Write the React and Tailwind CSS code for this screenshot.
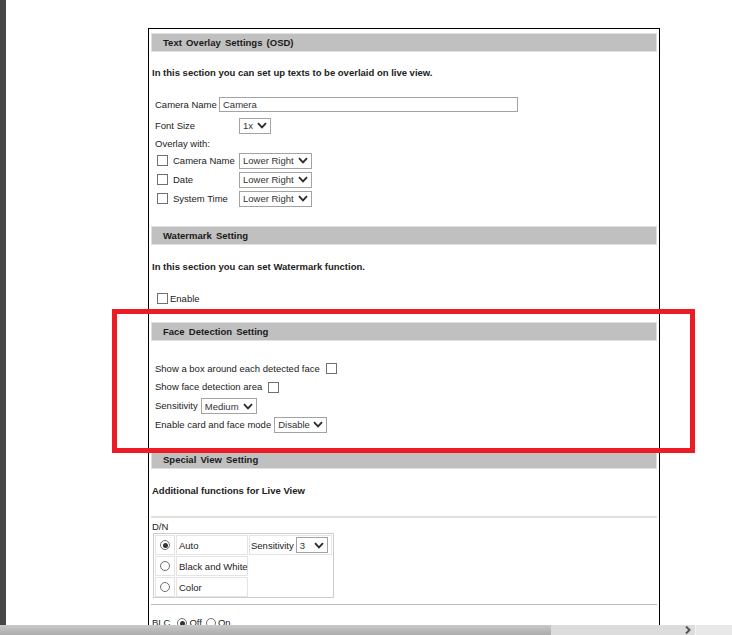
import React from "react";

function Chev() {
  return (
    <svg width="10" height="7" viewBox="0 0 10 7" className="shrink-0">
      <path d="M1 1.2 L5 5.4 L9 1.2" fill="none" stroke="#2a2a2a" strokeWidth="1.8" />
    </svg>
  );
}

function Select({ value, className }) {
  return (
    <div
      className={
        "flex items-center justify-between h-[16px] border border-[#a3a3a3] bg-white pl-[3px] pr-[3px] text-[#333] whitespace-nowrap " +
        className
      }
    >
      <span className="pt-[1px]">{value}</span>
      <Chev />
    </div>
  );
}

function Check({ className = "" }) {
  return <div className={"w-[11px] h-[11px] border border-[#707070] bg-white shrink-0 " + className} />;
}

function Radio({ checked }) {
  return (
    <div className="w-[10px] h-[10px] rounded-full border border-[#6f6f6f] bg-white flex items-center justify-center shrink-0">
      {checked && <div className="w-[5px] h-[5px] rounded-full bg-[#333]" />}
    </div>
  );
}

function Header({ children }) {
  return (
    <div className="h-[19px] bg-[#c0c0c0] border border-[#e0e0e0] flex items-center pl-[11px] pt-[1px] font-bold text-[#1a1a1a] [word-spacing:1.5px]">
      {children}
    </div>
  );
}

export default function App() {
  return (
    <div className="relative w-[732px] h-[635px] overflow-hidden bg-white flex font-['Liberation_Sans',Arial,sans-serif] text-[9.5px] text-[#222] leading-none whitespace-nowrap">
      <div className="w-[6px] h-[625px] bg-[#464646] shrink-0" />
      <div className="flex-1 pl-[142px] pt-[28px]">
        <div className="w-[512px] border border-b-0 border-black px-[2px] pt-[4px] h-[700px]">
          {/* Section 1 */}
          <Header>Text Overlay Settings (OSD)</Header>
          <div className="h-[41px] flex items-center pl-[1px] pt-[1px] font-bold">
            In this section you can set up texts to be overlaid on live view.
          </div>
          <div className="h-[22px] flex items-center pl-[4px] pt-[1px]">
            <span className="w-[64px]">Camera Name</span>
            <div className="w-[299px] h-[15px] border border-[#a3a3a3] flex items-center pl-[3px] text-[#333]">Camera</div>
          </div>
          <div className="h-[20px] flex items-center pl-[4px] pt-[1px]">
            <span className="w-[84px]">Font Size</span>
            <Select value="1x" className="w-[32px]" />
          </div>
          <div className="h-[16px] flex items-center pl-[4px] pt-[1px]">Overlay with:</div>
          <div className="h-[18px] flex items-center pl-[6px] pt-[1px]">
            <Check />
            <span className="ml-[5px] w-[66px]">Camera Name</span>
            <Select value="Lower Right" className="w-[73px]" />
          </div>
          <div className="h-[20px] flex items-center pl-[6px] pt-[1px]">
            <Check />
            <span className="ml-[5px] w-[66px]">Date</span>
            <Select value="Lower Right" className="w-[73px]" />
          </div>
          <div className="h-[18px] flex items-center pl-[6px] pt-[1px]">
            <Check />
            <span className="ml-[5px] w-[66px]">System Time</span>
            <Select value="Lower Right" className="w-[73px]" />
          </div>
          <div className="h-[19px]" />

          {/* Section 2 */}
          <Header>Watermark Setting</Header>
          <div className="h-[42px] flex items-center pl-[1px] pt-[1px] font-bold">
            In this section you can set Watermark function.
          </div>
          <div className="h-[22px] flex items-center pl-[6px] pt-[1px]">
            <Check />
            <span className="ml-[2px]">Enable</span>
          </div>
          <div className="h-[13px]" />

          {/* Section 3 */}
          <Header>Face Detection Setting</Header>
          <div className="h-[18px]" />
          <div className="h-[18px] flex items-center pl-[4px] pt-[1px]">
            <span>Show a box around each detected face</span>
            <Check className="ml-[6px]" />
          </div>
          <div className="h-[19px] flex items-center pl-[4px] pt-[1px]">
            <span>Show face detection area</span>
            <Check className="ml-[6px]" />
          </div>
          <div className="h-[19px] flex items-center pl-[4px] pt-[1px]">
            <span className="mr-[3px]">Sensitivity</span>
            <Select value="Medium" className="w-[56px]" />
          </div>
          <div className="h-[18px] flex items-center pl-[4px] pt-[1px]">
            <span className="mr-[3px]">Enable card and face mode</span>
            <Select value="Disable" className="w-[53px]" />
          </div>
          <div className="h-[17px]" />

          {/* Section 4 */}
          <Header>Special View Setting</Header>
          <div className="h-[42px] flex items-center pl-[1px] pt-[1px] font-bold">
            Additional functions for Live View
          </div>
          <div className="h-[5px]" />
          <div className="h-[2px] bg-[#e0e0e0]" />
          <div className="h-[3px]" />
          <div className="h-[12px] flex items-center pl-[1px]">D/N</div>
          <div className="ml-[2px] w-[181px] h-[65px] border border-[#cdcdcd] p-[1px] grid grid-cols-[20px_72px_83px] grid-rows-[20px_20px_20px] gap-[1px]">
            <div className="border border-[#e4e4e4] flex items-center justify-center"><Radio checked /></div>
            <div className="border border-[#e4e4e4] flex items-center pl-[2px] pt-[1px]">Auto</div>
            <div className="border border-[#e4e4e4] flex items-center pl-[1px]">
              <span className="mr-[2px] pt-[1px]">Sensitivity</span>
              <Select value="3" className="w-[32px]" />
            </div>
            <div className="border border-[#e4e4e4] flex items-center justify-center"><Radio /></div>
            <div className="border border-[#e4e4e4] flex items-center pl-[2px] pt-[1px]">Black and White</div>
            <div />
            <div className="border border-[#e4e4e4] flex items-center justify-center"><Radio /></div>
            <div className="border border-[#e4e4e4] flex items-center pl-[2px] pt-[1px]">Color</div>
            <div />
          </div>
          <div className="h-[6px]" />
          <div className="h-[1px] bg-[#bdbdbd]" />
          <div className="h-[22px] flex items-center pl-[1px] pt-[14px]">
            <span className="mr-[7px]">BLC</span>
            <Radio checked />
            <span className="ml-[2px] mr-[4px]">Off</span>
            <Radio />
            <span className="ml-[2px]">On</span>
          </div>
        </div>
      </div>

      {/* Red highlight rectangle overlay */}
      <div className="absolute left-[112px] top-[309px] w-[583px] h-[144px] border-[5px] border-[#ed1c24] pointer-events-none" />

      {/* Horizontal scrollbar overlay */}
      <div className="absolute left-0 right-0 bottom-0 h-[10px] flex">
        <div className="w-[551px] h-full bg-gradient-to-b from-[#c9c9c9] to-[#ababab]" />
        <div className="w-[144px] h-full bg-[#dcdcdc] flex items-center justify-end pr-[4px]">
          <svg width="6" height="8" viewBox="0 0 6 8"><path d="M1 0.5 L4.5 4 L1 7.5" fill="none" stroke="#555" strokeWidth="2" /></svg>
        </div>
        <div className="flex-1 h-full bg-[#e8e8e8] border-l border-[#f4f4f4]" />
      </div>
    </div>
  );
}
